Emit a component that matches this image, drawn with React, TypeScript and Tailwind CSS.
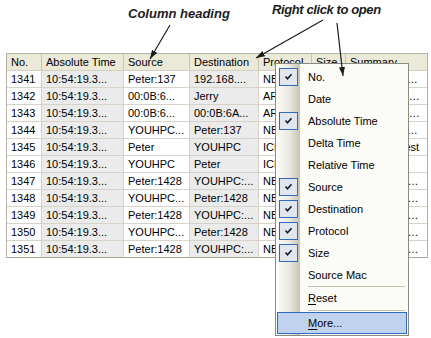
import React from 'react';

const rows = [
  ['1341', '10:54:19.3...', 'Peter:137', '192.168....', 'NBNS', '92', 'Name Query NB YOUHPC'],
  ['1342', '10:54:19.3...', '00:0B:6...', 'Jerry', 'ARP', '60', 'Who has 192.168.0.1'],
  ['1343', '10:54:19.3...', '00:0B:6...', '00:0B:6A...', 'ARP', '42', 'Reply 192.168.0.12 at'],
  ['1344', '10:54:19.3...', 'YOUHPC...', 'Peter:137', 'NBNS', '104', 'Name Query Response'],
  ['1345', '10:54:19.3...', 'Peter', 'YOUHPC', 'ICMP', '74', 'Echo Request'],
  ['1346', '10:54:19.3...', 'YOUHPC', 'Peter', 'ICMP', '74', 'Echo Reply'],
  ['1347', '10:54:19.3...', 'Peter:1428', 'YOUHPC:...', 'NBSS', '58', 'Session Message to'],
  ['1348', '10:54:19.3...', 'YOUHPC...', 'Peter:1428', 'NBSS', '58', 'Session Message from'],
  ['1349', '10:54:19.3...', 'Peter:1428', 'YOUHPC:...', 'NBSS', '58', 'Session Message to'],
  ['1350', '10:54:19.3...', 'YOUHPC...', 'Peter:1428', 'NBSS', '58', 'Session Message from'],
  ['1351', '10:54:19.3...', 'Peter:1428', 'YOUHPC:...', 'NBSS', '58', 'Session Message to'],
];

const headings = ['No.', 'Absolute Time', 'Source', 'Destination', 'Protocol', 'Size', 'Summary'];

const menuItems = [
  { label: 'No.', checked: true },
  { label: 'Date', checked: false },
  { label: 'Absolute Time', checked: true },
  { label: 'Delta Time', checked: false },
  { label: 'Relative Time', checked: false },
  { label: 'Source', checked: true },
  { label: 'Destination', checked: true },
  { label: 'Protocol', checked: true },
  { label: 'Size', checked: true },
  { label: 'Source Mac', checked: false },
];

function CheckBox() {
  return (
    <div className="w-[19px] h-[18px] border border-[#316ac5] bg-[#e1e6ee] flex items-center justify-center">
      <svg width="9" height="8" viewBox="0 0 9 8">
        <path d="M1.5 3.5 L3.5 5.8 L7.5 1.2" fill="none" stroke="#1a1a1a" strokeWidth="1.6" />
      </svg>
    </div>
  );
}

export default function App() {
  return (
    <div className="relative w-[431px] h-[338px] overflow-hidden bg-white text-black font-['Liberation_Sans',Arial,sans-serif]">
      {/* callout labels */}
      <div className="h-[53px] flex items-start text-[#1c1c1c] text-[13px] leading-[15px] font-bold italic">
        <span className="ml-[128px] mt-[6px] w-[144px]">Column heading</span>
        <span className="mt-[2px] tracking-[-0.4px]">Right click to open</span>
      </div>

      {/* packet list */}
      <div className="ml-[6px] w-[422px] border-x border-t border-[#b5b2a5] text-[11px] leading-none">
        <div className="grid grid-cols-[35px_82px_66px_69px_53px_34px_81px] h-[17px] bg-[#ebe9d8] border-b border-[#d3d0c2]">
          {headings.map((h, i) => (
            <div
              key={h}
              className={
                i < 6
                  ? 'flex items-center pl-[4px] border-r border-[#c7c4b2] whitespace-nowrap overflow-hidden'
                  : 'flex items-center pl-[4px] whitespace-nowrap overflow-hidden'
              }
            >
              {h}
            </div>
          ))}
        </div>
        {rows.map((r, ri) => (
          <div
            key={r[0]}
            className={
              ri === rows.length - 1
                ? 'grid grid-cols-[35px_82px_66px_69px_53px_34px_81px] h-[17px] border-b border-[#a8a597]'
                : 'grid grid-cols-[35px_82px_66px_69px_53px_34px_81px] h-[17px] border-b border-[#d6d3c8]'
            }
          >
            {r.map((c, ci) => (
              <div
                key={ci}
                className={
                  ci === 6
                    ? 'pl-[4px] pr-[6px] leading-[16px] whitespace-nowrap overflow-hidden text-ellipsis'
                    : ci === 1 || ci === 3
                    ? 'flex items-center pl-[4px] bg-[#ebebeb] border-r border-[#d6d3c8] whitespace-nowrap overflow-hidden'
                    : 'flex items-center pl-[4px] border-r border-[#d6d3c8] whitespace-nowrap overflow-hidden'
                }
              >
                {c}
              </div>
            ))}
          </div>
        ))}
      </div>

      {/* context menu */}
      <div className="absolute left-[275px] top-[63px] z-10 w-[134px] border border-[#8a8a85] pt-[2px] pb-[1px] text-[11px] leading-none bg-[linear-gradient(to_right,#fdfdfa_0px,#e9e7dd_14px,#c6c3b2_24px,#fbfbf8_24px)]">
        {menuItems.map((m) => (
          <div key={m.label} className="h-[22px] flex items-center">
            <div className="w-[32px] pl-[3px]">{m.checked && <CheckBox />}</div>
            <span>{m.label}</span>
          </div>
        ))}
        <div className="h-[1px] ml-[32px] mr-[3px] bg-[#c5c2b2]" />
        <div className="h-[22px] flex items-center pl-[32px]">
          <span>
            <span className="underline underline-offset-2">R</span>eset
          </span>
        </div>
        <div className="h-[3px] pt-[1px] ml-[32px] mr-[3px]">
          <div className="h-[1px] bg-[#c5c2b2]" />
        </div>
        <div className="h-[22px] mx-[1px] flex items-center pl-[30px] bg-[#c1d2ee] border border-[#316ac5]">
          <span>
            <span className="underline underline-offset-2">M</span>ore...
          </span>
        </div>
      </div>

      {/* callout arrows */}
      <svg className="absolute inset-0 z-20 pointer-events-none" width="431" height="338" viewBox="0 0 431 338">
        <defs>
          <marker id="ah" markerWidth="9" markerHeight="6" refX="9" refY="3" orient="auto" markerUnits="userSpaceOnUse">
            <path d="M0,0 L9,3 L0,6 z" fill="#1c1c1c" />
          </marker>
        </defs>
        <line x1="170" y1="25" x2="150" y2="59" stroke="#1c1c1c" strokeWidth="1.2" markerEnd="url(#ah)" />
        <line x1="323" y1="20" x2="256" y2="58" stroke="#1c1c1c" strokeWidth="1.2" markerEnd="url(#ah)" />
        <line x1="337" y1="23" x2="343" y2="76" stroke="#1c1c1c" strokeWidth="1.2" markerEnd="url(#ah)" />
      </svg>
    </div>
  );
}
